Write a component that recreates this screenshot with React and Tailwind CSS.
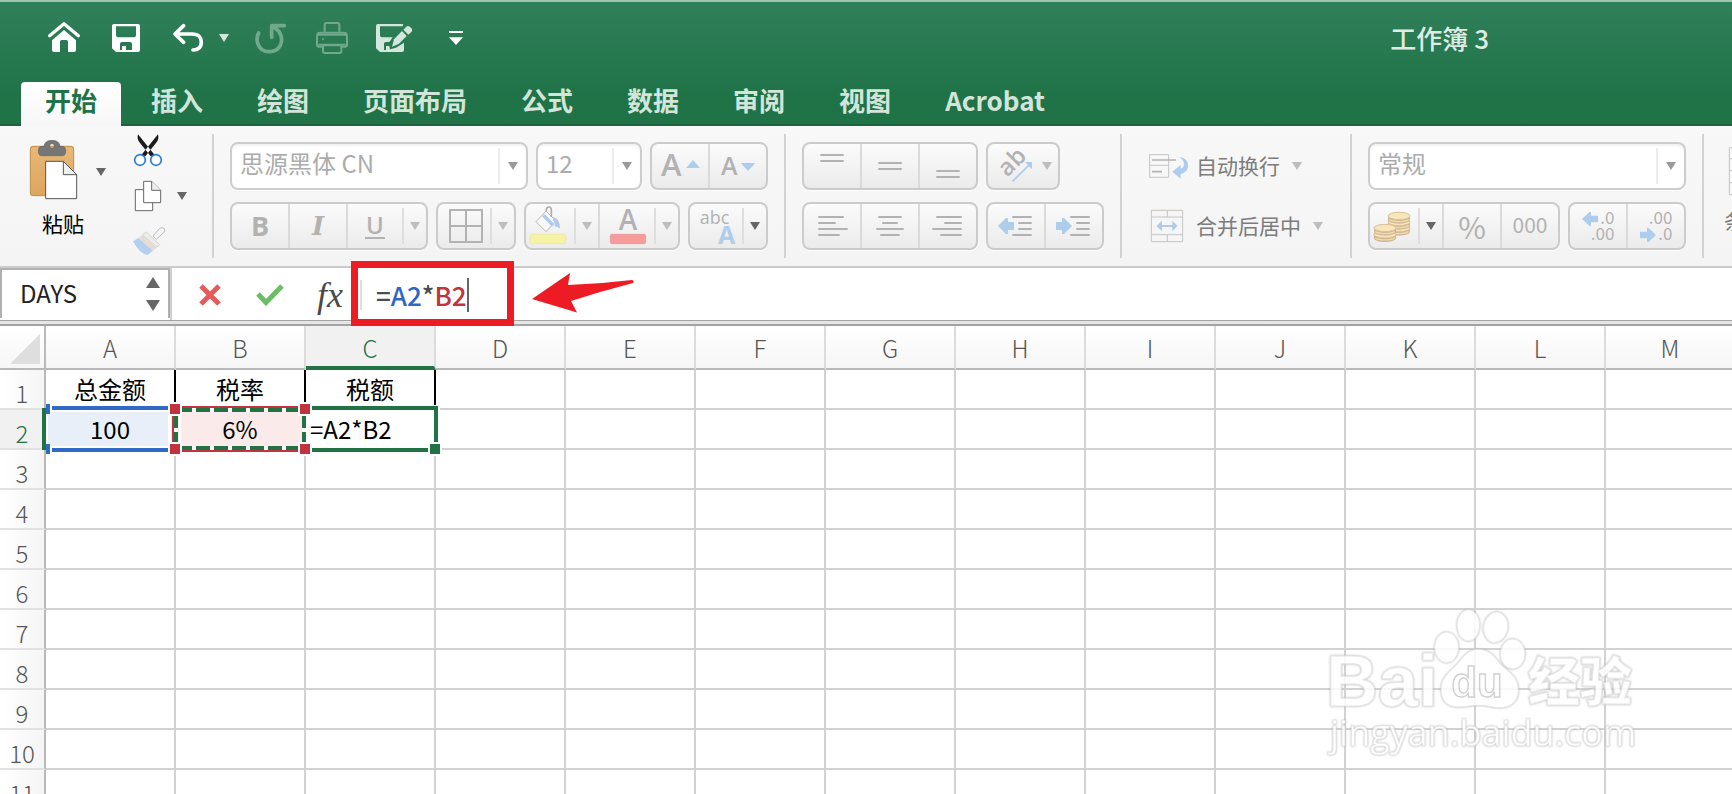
import React from 'react';

const COLUMNS = ['A', 'B', 'C', 'D', 'E', 'F', 'G', 'H', 'I', 'J', 'K', 'L', 'M'];
const ROWS = [1, 2, 3, 4, 5, 6, 7, 8, 9, 10, 11];
const CELLS = {
  A1: '总金额',
  B1: '税率',
  C1: '税额',
  A2: '100',
  B2: '6%',
  C2: '=A2*B2',
};

/* Icons are drawn on a grid of three units per pixel. */
function Icon({ vb, className, children }) {
  return (
    <svg viewBox={vb} className={`shrink-0 overflow-visible ${className}`} fill="none" aria-hidden="true">
      {children}
    </svg>
  );
}

function Caret({ className = 'fill-[#bdbdbd]' }) {
  return (
    <svg viewBox="0 0 10 8" className={`h-2 w-[10px] shrink-0 ${className}`} aria-hidden="true">
      <path d="M0 0H10L5 8Z" />
    </svg>
  );
}

function QuickButton({ label, children }) {
  return (
    <button type="button" aria-label={label} className="flex h-full w-[62px] items-center justify-center">
      {children}
    </button>
  );
}

function QuickAccess() {
  return (
    <div className="flex h-full items-center pl-[33px]">
      <QuickButton label="主页">
        <Icon vb="144 66 96 96" className="size-8">
          <path d="M149 107L192 71L235 107" stroke="#fff" strokeWidth="10" strokeLinecap="round" strokeLinejoin="round" />
          <path d="M156 121L192 90L228 121V150Q228 156 222 156H204V125Q204 120 199 120H185Q180 120 180 125V156H162Q156 156 156 150Z" fill="#fff" />
        </Icon>
      </QuickButton>
      <QuickButton label="保存">
        <Icon vb="336 72 84 84" className="size-7">
          <path
            fillRule="evenodd"
            fill="#fff"
            d="M342 72H414Q420 72 420 78V150Q420 156 414 156H348L336 145V78Q336 72 342 72ZM348 79V106Q348 112 354 112H402Q408 112 408 106V79ZM360 150V132Q360 126 366 126H390Q396 126 396 132V150H378V138H366V150Z"
          />
        </Icon>
      </QuickButton>
      <QuickButton label="撤消">
        <Icon vb="519 69 96 90" className="h-[30px] w-8">
          <path d="M554 77L528 102L554 127M530 102H580C598 102 607 112 607 126C607 142 598 150 582 150" stroke="#fff" strokeWidth="11" strokeLinecap="round" strokeLinejoin="round" />
        </Icon>
      </QuickButton>
      <button type="button" aria-label="撤消选项" className="flex h-full w-5 items-center">
        <Caret className="fill-[#d5e6dc]" />
      </button>
      <QuickButton label="恢复">
        <Icon vb="759 66 96 96" className="size-8">
          <path d="M773 99C763 116 768 154 804 155C838 155 848 124 838 102C833 91 822 83 812 78M850 77H812V112" stroke="#72a88c" strokeWidth="11" strokeLinecap="round" strokeLinejoin="round" />
        </Icon>
      </QuickButton>
      <QuickButton label="打印">
        <Icon vb="948 66 96 96" className="size-8">
          <path d="M974 98V74Q974 69 979 69H1013Q1018 69 1018 74V98" stroke="#72a88c" strokeWidth="6" />
          <path d="M968 140H957Q951 140 951 134V108Q951 98 961 98H1031Q1041 98 1041 108V134Q1041 140 1035 140H1025" stroke="#72a88c" strokeWidth="6" />
          <path d="M969 136H1024V154Q1024 159 1019 159H974Q969 159 969 154Z" stroke="#72a88c" strokeWidth="6" />
          <path d="M955 134H1037M953 104H1039" stroke="#72a88c" strokeWidth="6" />
          <circle cx="969" cy="117" r="3" fill="#72a88c" />
        </Icon>
      </QuickButton>
      <QuickButton label="另存为">
        <Icon vb="1128 69 111 90" className="h-[30px] w-[37px]">
          <path
            fillRule="evenodd"
            fill="#d5e6dc"
            d="M1134 72H1206Q1212 72 1208 79L1205 79H1140V106Q1140 112 1146 112H1178L1168 126H1158Q1152 126 1152 132V150H1158V138H1168L1170 148L1188 143L1212 128V150Q1212 156 1206 156H1140L1128 145V78Q1128 72 1134 72Z"
          />
          <path d="M1176 140L1182 118L1206 93L1220 108L1196 132Z" fill="#d5e6dc" />
          <path d="M1210 89L1219 80Q1225 75 1233 83Q1240 90 1234 96L1225 104Z" fill="#d5e6dc" />
        </Icon>
      </QuickButton>
      <QuickButton label="自定义快速访问工具栏">
        <Icon vb="1347 96 42 48" className="h-4 w-[14px]">
          <path d="M1347 99H1389V105H1347ZM1347 118H1389L1368 141Z" fill="#fff" />
        </Icon>
      </QuickButton>
    </div>
  );
}

const TABS = ['开始', '插入', '绘图', '页面布局', '公式', '数据', '审阅', '视图', 'Acrobat'];

function Header() {
  return (
    <header className="shrink-0 border-t-2 border-[#9fc4b0] bg-linear-to-b from-[#30805a] to-[#1f7347] to-75% shadow-[inset_0_-2px_0_#1a633d]">
      <div className="flex h-[72px] items-center justify-between">
        <QuickAccess />
        <h1 className="mr-[243px] text-[26px] leading-8 font-medium text-[#dfece5]">工作簿 3</h1>
      </div>
      <nav className="flex gap-[6px] pt-2 pl-[21px]">
        {TABS.map((tab, i) => (
          <button
            key={tab}
            type="button"
            className={
              i === 0
                ? 'h-11 rounded-t bg-linear-to-b from-white to-[#f7f7f7] px-6 pb-2 text-[26px] leading-9 font-bold text-[#1f7347]'
                : 'h-11 px-6 pb-2 text-[26px] leading-9 font-bold text-[#d3e4da]'
            }
          >
            {tab}
          </button>
        ))}
      </nav>
    </header>
  );
}

function Separator() {
  return <div className="my-2 w-[2px] shrink-0 bg-[#d2d2d2]" />;
}

function Group({ className = '', children }) {
  return (
    <div
      className={`flex h-12 shrink-0 divide-x-2 divide-[#dadada] rounded-lg border-2 border-[#cbcbcb] bg-linear-to-b from-[#fbfbfb] to-[#ebebeb] shadow-[0_1px_1px_#fff] ${className}`}
    >
      {children}
    </div>
  );
}

function Tool({ label, className = 'flex-1', children }) {
  return (
    <button type="button" aria-label={label} className={`flex h-full min-w-0 items-center justify-center text-[#b2b2b2] ${className}`}>
      {children}
    </button>
  );
}

/* A tool with a drop-down arrow behind a short inner rule. */
function SplitTool({ label, className = 'flex-1', caret, children }) {
  return (
    <div className={`flex h-full items-center ${className}`}>
      <Tool label={label}>{children}</Tool>
      <span className="h-9 w-[2px] shrink-0 bg-[#dedede]" />
      <button type="button" aria-label={`${label}选项`} className="flex h-full w-[22px] shrink-0 items-center justify-center">
        <Caret className={caret} />
      </button>
    </div>
  );
}

function SelectBox({ label, value, className }) {
  return (
    <div className={`flex h-12 shrink-0 items-center rounded-lg border-2 border-[#cdcdcd] bg-white pr-2 shadow-[0_1px_1px_#fff,inset_0_2px_2px_#f2f2f2] ${className}`}>
      <select aria-label={label} className="h-full min-w-0 flex-1 appearance-none bg-transparent pb-[6px] pl-2 text-2xl text-[#acacac] outline-none">
        <option>{value}</option>
      </select>
      <span className="mr-2 h-9 w-[2px] shrink-0 bg-[#ececec]" />
      <Caret className="fill-[#999]" />
    </div>
  );
}

function Lines({ vb, d }) {
  return (
    <Icon vb={vb} className="h-[42px] w-14">
      <path d={d} stroke="#b2b2b2" strokeWidth="6" strokeLinecap="round" />
    </Icon>
  );
}

function ClipboardGroup() {
  return (
    <div className="flex w-[212px] shrink-0">
      <button type="button" className="flex w-[91px] shrink-0 flex-col items-start pt-3 pl-[27px] text-[21px] leading-8 text-black">
        <Icon vb="81 39 159 195" className="h-[65px] w-[53px]">
          <defs>
            <linearGradient id="board" x1="0" y1="0" x2="0" y2="1">
              <stop offset="0" stopColor="#e6b877" />
              <stop offset="1" stopColor="#dda65f" />
            </linearGradient>
          </defs>
          <rect x="91" y="64" width="130" height="148" rx="8" fill="url(#board)" stroke="#c58d48" strokeWidth="3" />
          <path fillRule="evenodd" d="M122 64H132Q134 46 156 46Q178 46 180 64H190Q197 66 197 78Q197 92 188 92H124Q115 92 115 78Q115 66 122 64ZM156 56A7 7 0 1 0 156 70A7 7 0 1 0 156 56Z" fill="#767676" stroke="#666" strokeWidth="2" />
          <path d="M137 109H190L230 149V221H137Z" fill="#fff" stroke="#555" strokeWidth="3" />
          <path d="M190 109V149H230Z" fill="#f0f0f0" stroke="#555" strokeWidth="3" />
        </Icon>
        <span className="pt-1 pl-[15px]">粘贴</span>
      </button>
      <button type="button" aria-label="粘贴选项" className="flex h-[92px] w-5 shrink-0 items-center justify-center">
        <Caret className="fill-[#666]" />
      </button>
      <div className="flex flex-col pt-2 pl-[21px]">
        <button type="button" aria-label="剪切" className="h-8 w-9">
          <Icon vb="396 27 96 99" className="h-[33px] w-8">
            <path d="M414 28Q410 44 420 54L452 94L464 90ZM474 28Q478 44 468 54L436 94L424 90Z" fill="#1c1c1c" />
            <circle cx="420" cy="105" r="16" stroke="#2b7cd3" strokeWidth="5" fill="#fff" />
            <circle cx="468" cy="105" r="16" stroke="#2b7cd3" strokeWidth="5" fill="#fff" />
          </Icon>
        </button>
        <div className="flex h-[60px] items-center gap-3">
          <button type="button" aria-label="复制">
            <Icon vb="396 165 96 96" className="size-8">
              <path d="M406 194H458V257H406Z" fill="#fff" stroke="#666" strokeWidth="3" />
              <path d="M431 169H455L482 196V233H431Z" fill="#fff" stroke="#666" strokeWidth="3" />
              <path d="M455 169V196H482" fill="#eee" stroke="#666" strokeWidth="3" />
            </Icon>
          </button>
          <button type="button" aria-label="复制选项" className="p-px">
            <Caret className="fill-[#666]" />
          </button>
        </div>
        <button type="button" aria-label="格式刷" className="w-9">
          <Icon vb="393 306 102 90" className="h-[30px] w-[34px]">
            <path d="M456 336L476 313Q484 308 490 314Q493 320 488 326L466 346Z" fill="#f4f4f4" stroke="#bbb" strokeWidth="3" />
            <path d="M436 324L476 362L468 370L424 332Z" fill="#ececec" stroke="#c4c4c4" strokeWidth="2" />
            <path d="M424 332L468 370L456 380L412 342Z" fill="#e6ddd2" />
            <path d="M396 352L412 342L456 380L440 393Q418 392 396 352Z" fill="#b4d0ee" />
          </Icon>
        </button>
      </div>
    </div>
  );
}

function FontGroup() {
  return (
    <div className="flex shrink-0 flex-col gap-3 px-4 pt-4">
      <div className="flex items-center gap-2">
        <SelectBox label="字体" value="思源黑体 CN" className="w-[298px]" />
        <SelectBox label="字号" value="12" className="w-[106px]" />
        <Group className="w-[118px]">
          <Tool label="增大字号">
            <Icon vb="756 60 168 126" className="h-[42px] w-14">
              <text x="783" y="153" fontSize="93" fontWeight="600" fill="#b2b2b2" className="font-['Open_Sans',sans-serif]">A</text>
              <path d="M858 129L879 105L900 129Z" fill="#aecdec" />
            </Icon>
          </Tool>
          <Tool label="减小字号">
            <Icon vb="930 60 168 126" className="h-[42px] w-14">
              <text x="963" y="150" fontSize="75" fontWeight="600" fill="#b2b2b2" className="font-['Open_Sans',sans-serif]">A</text>
              <path d="M1022 114H1066L1044 138Z" fill="#aecdec" />
            </Icon>
          </Tool>
        </Group>
      </div>
      <div className="flex items-center gap-2">
        <Group className="w-[198px]">
          <Tool label="加粗" className="w-[58px]"><span className="font-['Open_Sans',sans-serif] text-[27px] leading-8 font-bold">B</span></Tool>
          <Tool label="倾斜" className="w-[58px]"><span className="font-['DejaVu_Serif',serif] text-[26px] leading-8 font-bold italic">I</span></Tool>
          <SplitTool label="下划线">
            <span className="w-5 border-b-2 border-[#b2b2b2] text-center font-['Open_Sans',sans-serif] text-2xl leading-6 font-semibold">U</span>
          </SplitTool>
        </Group>
        <Group className="w-20">
          <SplitTool label="边框">
            <Icon vb="114 240 156 126" className="h-[42px] w-[52px]">
              <path d="M150 255H246V351H150ZM198 255V351M150 303H246" stroke="#b2b2b2" strokeWidth="6" />
            </Icon>
          </SplitTool>
        </Group>
        <Group className="w-[156px]">
          <SplitTool label="填充颜色" className="w-[74px]">
            <Icon vb="378 240 144 126" className="h-[42px] w-12">
              <path d="M408 290L438 258L468 288L438 320Z" fill="#f8f8f8" stroke="#b8b8b8" strokeWidth="3" />
              <path d="M426 274L434 268L464 298L456 305Z" fill="#aecdec" />
              <path d="M439 258V253Q440 246 447 246Q454 246 454 254V276" stroke="#adadad" strokeWidth="5" />
              <path d="M460 276Q480 280 480 310L464 304Q468 294 458 284Z" fill="#aecdec" />
              <rect x="391" y="328" width="106" height="28" rx="5" fill="#f5f3a5" stroke="#ebe78f" strokeWidth="2" />
            </Icon>
          </SplitTool>
          <SplitTool label="字体颜色">
            <Icon vb="600 240 162 126" className="h-[42px] w-[54px]">
              <text x="684" y="315" fontSize="84" fontWeight="600" textAnchor="middle" fill="#b2b2b2" className="font-['Open_Sans',sans-serif]">A</text>
              <rect x="631" y="328" width="106" height="28" rx="5" fill="#f59c9a" stroke="#ea8e8c" strokeWidth="2" />
            </Icon>
          </SplitTool>
        </Group>
        <Group className="w-20">
          <SplitTool label="文本效果" caret="fill-[#666]">
            <Icon vb="870 240 156 126" className="h-[42px] w-[52px]">
              <text x="899" y="296" fontSize="54" fill="#b2b2b2" className="font-['Open_Sans',sans-serif]">abc</text>
              <text x="954" y="357" fontSize="75" fontWeight="700" fill="#aecdec" className="font-['Open_Sans',sans-serif]">A</text>
            </Icon>
          </SplitTool>
        </Group>
      </div>
    </div>
  );
}

function AlignGroup() {
  return (
    <div className="flex shrink-0 flex-col gap-3 px-4 pt-4">
      <div className="flex items-center gap-2">
        <Group className="w-44">
          <Tool label="顶端对齐"><Lines vb="72 60 168 126" d="M123 90H189M123 108H189" /></Tool>
          <Tool label="垂直居中"><Lines vb="246 60 168 126" d="M297 114H363M297 132H363" /></Tool>
          <Tool label="底端对齐"><Lines vb="420 60 168 126" d="M471 138H537M471 156H537" /></Tool>
        </Group>
        <Group className="w-[74px]">
          <Tool label="方向">
            <Icon vb="624 60 210 126" className="h-[42px] w-[70px]">
              <text x="682" y="158" fontSize="72" fontWeight="600" fill="#b2b2b2" transform="rotate(-45 682 158)" className="font-['Open_Sans',sans-serif]">ab</text>
              <path d="M697 170L746 121" stroke="#aecdec" strokeWidth="5" />
              <path d="M734 111H756V133Z" fill="#aecdec" />
              <path d="M786 111H816L801 135Z" fill="#bdbdbd" />
            </Icon>
          </Tool>
        </Group>
      </div>
      <div className="flex items-center gap-2">
        <Group className="w-44">
          <Tool label="左对齐"><Lines vb="72 240 168 126" d="M117 276H189M117 294H165M117 312H201M117 330H177" /></Tool>
          <Tool label="居中"><Lines vb="246 240 168 126" d="M297 276H363M309 294H351M291 312H369M303 330H357" /></Tool>
          <Tool label="右对齐"><Lines vb="420 240 168 126" d="M471 276H543M495 294H543M459 312H543M483 330H543" /></Tool>
        </Group>
        <Group className="w-[118px]">
          <Tool label="减少缩进">
            <Icon vb="624 240 168 126" className="h-[42px] w-14">
              <path d="M699 276H753M717 294H753M717 312H753M699 330H753" stroke="#b2b2b2" strokeWidth="6" strokeLinecap="round" />
              <path d="M654 303L678 279H684V291H702V315H684V327H678Z" fill="#aecdec" />
            </Icon>
          </Tool>
          <Tool label="增加缩进">
            <Icon vb="798 240 168 126" className="h-[42px] w-14">
              <path d="M873 276H927M891 294H927M891 312H927M873 330H927" stroke="#b2b2b2" strokeWidth="6" strokeLinecap="round" />
              <path d="M876 303L852 279H846V291H828V315H846V327H852Z" fill="#aecdec" />
            </Icon>
          </Tool>
        </Group>
      </div>
    </div>
  );
}

function WrapGroup() {
  return (
    <div className="flex w-[228px] shrink-0 flex-col gap-3 pt-4 pl-[26px] text-[21px] leading-8 text-[#7c7c7c]">
      <button type="button" className="flex h-12 items-center">
        <Icon vb="54 84 126 84" className="h-7 w-[42px]">
          <path d="M59 92H116V160H59ZM59 124H116" stroke="#c4c4c4" strokeWidth="3" />
          <path d="M66 108H138M66 143H96" stroke="#b2b2b2" strokeWidth="5" />
          <path d="M147 99C168 101 176 114 174 128C172 141 162 148 152 150V164L127 143L152 123V134C158 133 162 128 162 121C162 112 157 105 147 99Z" fill="#aecdec" />
        </Icon>
        <span className="pr-3 pb-[2px] pl-[6px]">自动换行</span>
        <Caret />
      </button>
      <button type="button" className="flex h-12 items-center">
        <Icon vb="54 237 126 126" className="size-[42px]">
          <path d="M64 253H158V347H64ZM64 273H158M64 326H158M112 253V273M112 326V347" stroke="#c4c4c4" strokeWidth="3" />
          <path d="M79 300L96 284V297H127V284L143 300L127 316V303H96V316Z" fill="#aecdec" />
        </Icon>
        <span className="pr-3 pb-[2px] pl-[6px]">合并后居中</span>
        <Caret />
      </button>
    </div>
  );
}

function Coin({ x, y }) {
  return (
    <g>
      <path d={`M${x} ${y}V${y + 12}A33 11 0 0 0 ${x + 66} ${y + 12}V${y}Z`} fill="#d0b596" />
      <path d={`M${x + 4} ${y + 11}A33 11 0 0 0 ${x + 62} ${y + 11}`} stroke="#f0dca6" strokeWidth="4" />
      <ellipse cx={x + 33} cy={y} rx="33" ry="11" fill="#f6e6b8" stroke="#d9c199" strokeWidth="3" />
    </g>
  );
}

function NumberGroup() {
  return (
    <div className="flex shrink-0 flex-col gap-3 px-4 pt-4">
      <SelectBox label="数字格式" value="常规" className="w-[318px]" />
      <div className="flex items-center gap-2">
        <Group className="w-48">
          <SplitTool label="会计数字格式" caret="fill-[#666]" className="w-[74px]">
            <Icon vb="720 240 144 126" className="h-[42px] w-12">
              <Coin x={774} y={309} />
              <Coin x={774} y={291} />
              <Coin x={774} y={273} />
              <Coin x={732} y={328} />
              <Coin x={732} y={309} />
            </Icon>
          </SplitTool>
          <Tool label="百分比样式"><span className="text-[30px] leading-8">%</span></Tool>
          <Tool label="千位分隔样式"><span className="pb-1 text-[21px] leading-8">000</span></Tool>
        </Group>
        <Group className="w-[118px]">
          <Tool label="增加小数位数">
            <Icon vb="660 240 168 126" className="h-[42px] w-14">
              <path d="M696 282L718 261H723V272H744V292H723V303H718Z" fill="#aecdec" />
              <text x="793" y="297" fontSize="51" textAnchor="end" fill="#b2b2b2">.0</text>
              <text x="793" y="345" fontSize="51" textAnchor="end" fill="#b2b2b2">.00</text>
            </Icon>
          </Tool>
          <Tool label="减少小数位数">
            <Icon vb="834 240 168 126" className="h-[42px] w-14">
              <path d="M918 330L896 309H891V320H870V340H891V351H896Z" fill="#aecdec" />
              <text x="967" y="297" fontSize="51" textAnchor="end" fill="#b2b2b2">.00</text>
              <text x="967" y="345" fontSize="51" textAnchor="end" fill="#b2b2b2">.0</text>
            </Icon>
          </Tool>
        </Group>
      </div>
    </div>
  );
}

function StylesGroup() {
  return (
    <button type="button" className="flex shrink-0 flex-col items-start pt-5 pl-5 text-[21px] leading-8 text-[#7c7c7c]">
      <Icon vb="0 0 150 156" className="ml-1 h-[52px] w-[50px]">
        <path d="M4 5H140V146H4ZM4 38H140M4 74H140M4 110H140M50 5V146M95 5V146" stroke="#c4c4c4" strokeWidth="3" />
      </Icon>
      <span className="pt-[6px] whitespace-nowrap">条件格式</span>
    </button>
  );
}

function Ribbon() {
  return (
    <div className="flex h-[142px] shrink-0 overflow-hidden border-b-2 border-[#cbcbcb] bg-linear-to-b from-[#f8f8f8] to-[#f4f4f4]">
      <ClipboardGroup />
      <Separator />
      <FontGroup />
      <Separator />
      <AlignGroup />
      <Separator />
      <WrapGroup />
      <Separator />
      <NumberGroup />
      <Separator />
      <StylesGroup />
    </div>
  );
}

function FormulaBar() {
  return (
    <div className="relative z-10 shrink-0">
      <div className="flex h-[52px] bg-white">
        <div className="flex h-[50px] w-[170px] shrink-0 items-center border-2 border-b-0 border-[#b0b0b0]">
          <input aria-label="名称框" defaultValue="DAYS" className="min-w-0 flex-1 bg-transparent pb-[2px] pl-[18px] text-2xl text-[#222] outline-none" />
          <button type="button" aria-label="选择名称" className="px-2">
            <svg viewBox="0 0 14 34" className="h-[34px] w-[14px] fill-[#666]" aria-hidden="true">
              <path d="M7 0L14 11H0ZM7 34L0 23H14Z" />
            </svg>
          </button>
        </div>
        <div className="flex min-w-0 flex-1 items-center border-l-2 border-[#cfcfcf] pt-px pl-2">
          <button type="button" aria-label="取消" className="flex w-[60px] justify-center">
            <svg viewBox="0 0 22 22" className="size-[22px]" fill="none" aria-hidden="true">
              <path d="M2 2L20 20M20 2L2 20" stroke="#e55b5b" strokeWidth="5" />
            </svg>
          </button>
          <button type="button" aria-label="输入" className="flex w-[60px] justify-center">
            <svg viewBox="0 0 28 22" className="h-[22px] w-7" fill="none" aria-hidden="true">
              <path d="M2 10L10 18.500L26 2" stroke="#6bbd66" strokeWidth="5" />
            </svg>
          </button>
          <button type="button" aria-label="插入函数" className="w-[60px] text-center font-['Liberation_Serif',serif] text-4xl leading-9 text-[#4a4a4a] italic">
            fx
          </button>
          <span className="h-[30px] w-[2px] bg-[#dedede]" />
          <div
            role="textbox"
            aria-label="编辑栏"
            contentEditable
            suppressContentEditableWarning
            className="flex min-w-0 flex-1 items-center pl-[14px] text-[26px] leading-8 font-medium text-[#4d4d4d] outline-none"
          >
            <span>=</span>
            <span className="text-[#2f67c5]">A2</span>
            <span>*</span>
            <span className="text-[#c2333d]">B2</span>
            <span className="h-[34px] w-[2px] bg-[#666]" />
          </div>
        </div>
      </div>
      <div className="h-[6px] border-t border-b-2 border-[#a3a3a3] bg-[#e6e6e6]" />
      <div className="pointer-events-none absolute -top-[7px] left-[351px] h-[65px] w-[163px] border-[7px] border-[#ed1c24]" />
      <svg viewBox="532 273 102 40" className="pointer-events-none absolute top-[5px] left-[532px] h-10 w-[102px]" aria-hidden="true">
        <path d="M532 299L570 273L568 285Q600 284 632 280Q635 281 633 283Q602 291 571 301L577 312.500Z" fill="#ed1c24" />
      </svg>
    </div>
  );
}

/* Outlines of the referenced ranges and the edited cell in row 2. */
function RangeMarks() {
  return (
    <svg viewBox="40 400 404 58" className="pointer-events-none absolute top-[74px] left-10 h-[58px] w-[404px]" aria-hidden="true">
      <path d="M42 408H46V450H42Z" fill="#217346" />
      <path d="M46 405H440V412H46ZM46 446H440V453H46Z" fill="#fff" />
      <path d="M46 410H48V448H46ZM168 410H171V448H168ZM179 412H181V446H179Z" fill="#fff" />
      <path d="M52 406H168V410H52ZM52 448H168V452H52ZM46 404H50V414H46ZM46 444H50V454H46Z" fill="#3069c6" />
      <path d="M182 406H298V408H182ZM182 450H298V452H182ZM172 416H174V442H172Z" fill="#c2333d" />
      <path d="M182 410H298M182 448H298" stroke="#217346" strokeWidth="4" strokeDasharray="14 4" strokeDashoffset="4" />
      <path d="M174 414H178V444H174ZM302 414H306V444H302Z" fill="#fff" />
      <path d="M176 416V442M304 416V442" stroke="#217346" strokeWidth="4" strokeDasharray="12 4" />
      <path d="M312 406H438V442H434V410H312ZM312 448H428V452H312Z" fill="#217346" />
      <path d="M428 442H442V456H428Z" fill="#fff" />
      <path d="M430 444H440V454H430Z" fill="#217346" />
      <path d="M168 402H182V416H168ZM168 442H182V456H168ZM298 402H312V416H298ZM298 442H312V456H298Z" fill="#fff" />
      <path d="M170 404H180V414H170ZM170 444H180V454H170ZM300 404H310V414H300ZM300 444H310V454H300Z" fill="#c2333d" />
    </svg>
  );
}

function cellClass(id, row, col) {
  if (id === 'C2') return 'border-r-2 border-b-2 border-[#d2d2d2] pl-1 text-left';
  if (id === 'A2') return 'border-r-2 border-b-2 border-[#d2d2d2] bg-[#e8eff9]';
  if (id === 'B2') return 'border-r-2 border-b-2 border-[#d2d2d2] bg-[#faeaea]';
  if (row === 1 && col < 3) return 'border-r-2 border-b-2 border-r-black border-b-[#d2d2d2]';
  return 'border-r-2 border-b-2 border-[#d2d2d2]';
}

function Sheet() {
  return (
    <table className="w-[1736px] table-fixed border-separate border-spacing-0 text-center text-2xl leading-7 text-black">
      <thead>
        <tr className="h-11">
          <th aria-label="全选" className="w-[46px] border-r-2 border-b-2 border-[#b9b9b9] bg-linear-to-b from-white to-[#f6f6f6] p-0">
            <svg viewBox="0 0 44 42" className="h-[42px] w-11" aria-hidden="true">
              <path d="M40 8V38H10Z" fill="#dedede" />
            </svg>
          </th>
          {COLUMNS.map((c) => (
            <th
              key={c}
              scope="col"
              className={
                c === 'C'
                  ? 'w-[130px] border-r-2 border-b-4 border-r-[#dcdcdc] border-b-[#217346] bg-[#f1f1f1] p-0 pt-1 font-light text-[#217346]'
                  : 'w-[130px] border-r-2 border-b-2 border-r-[#dcdcdc] border-b-[#b9b9b9] bg-linear-to-b from-white to-[#f6f6f6] p-0 pt-[2px] font-light text-[#555]'
              }
            >
              {c}
            </th>
          ))}
        </tr>
      </thead>
      <tbody>
        {ROWS.map((r) => (
          <tr key={r} className="h-10">
            <th
              scope="row"
              className={
                r === 2
                  ? 'border-r-2 border-b-2 border-r-[#b9b9b9] border-b-[#e2e2e2] bg-[#f1f1f1] p-0 pt-2 font-light text-[#217346]'
                  : 'border-r-2 border-b-2 border-r-[#b9b9b9] border-b-[#e2e2e2] bg-linear-to-r from-white to-[#f5f5f5] p-0 pt-2 font-light text-[#555]'
              }
            >
              {r}
            </th>
            {COLUMNS.map((c, i) => (
              <td key={c} className={`p-0 ${cellClass(c + r, r, i)}`}>
                {CELLS[c + r]}
              </td>
            ))}
          </tr>
        ))}
      </tbody>
    </table>
  );
}

function Watermark() {
  return (
    <svg
      viewBox="60 30 1020 510"
      className="pointer-events-none absolute right-[72px] bottom-6 h-[170px] w-[340px] opacity-85 drop-shadow-[0_0_1px_#aaa]"
      fill="#fff"
      stroke="#e2e2e2"
      strokeWidth="3"
      aria-hidden="true"
    >
      <text x="78" y="347" fontSize="216" fontWeight="700" className="font-['Liberation_Sans',sans-serif]">Bai</text>
      <ellipse cx="440" cy="172" rx="36" ry="46" />
      <ellipse cx="505" cy="106" rx="34" ry="47" />
      <ellipse cx="587" cy="112" rx="36" ry="46" transform="rotate(10 587 112)" />
      <ellipse cx="638" cy="192" rx="37" ry="45" />
      <path d="M535 178C580 178 590 216 614 234C638 252 656 272 655 300C654 336 632 353 600 353C575 353 565 346 538 346C510 346 500 351 474 351C440 351 423 330 423 298C423 270 440 252 460 234C486 212 496 178 535 178Z" />
      <text x="454" y="322" fontSize="126" fontWeight="700" stroke="#c8c8c8" strokeWidth="4" className="font-['Liberation_Sans',sans-serif]">du</text>
      <text x="684" y="332" fontSize="156" fontWeight="900">经验</text>
      <text x="90" y="468" fontSize="108" strokeWidth="2" className="font-['Open_Sans',sans-serif]">jingyan.baidu.com</text>
    </svg>
  );
}

export default function App() {
  return (
    <div className="flex h-screen flex-col overflow-hidden bg-white font-['Noto_Sans_CJK_SC',sans-serif]">
      <Header />
      <Ribbon />
      <FormulaBar />
      <main className="relative min-h-0 flex-1 overflow-hidden">
        <Sheet />
        <RangeMarks />
        <Watermark />
      </main>
    </div>
  );
}
